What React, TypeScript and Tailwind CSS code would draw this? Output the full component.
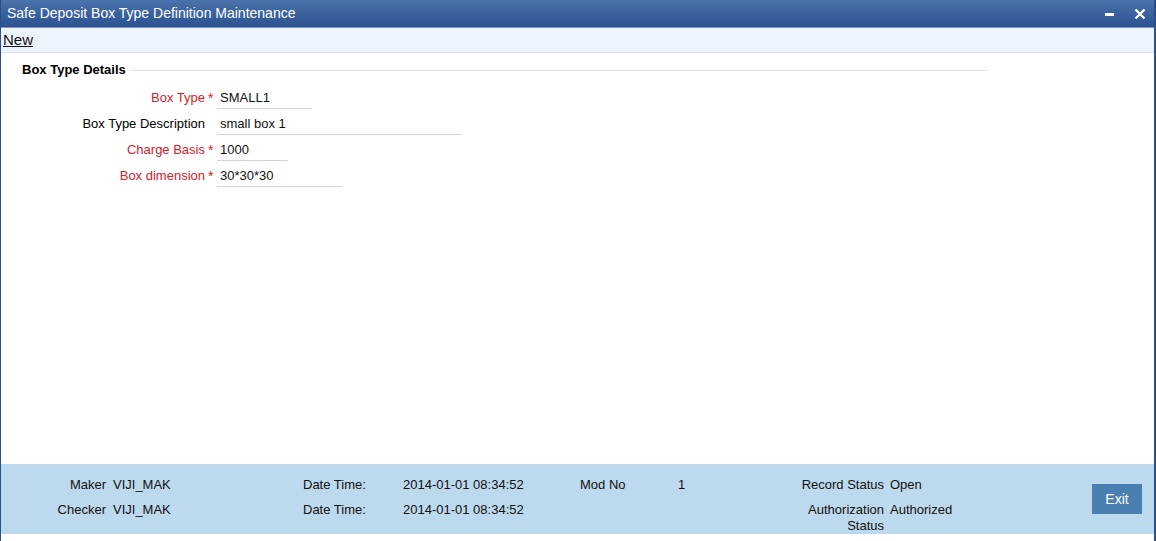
import React from 'react';

const fields = [
  { label: 'Box Type', required: true, value: 'SMALL1', width: 'w-[95px]' },
  { label: 'Box Type Description', required: false, value: 'small box 1', width: 'w-[245px]' },
  { label: 'Charge Basis', required: true, value: '1000', width: 'w-[71px]' },
  { label: 'Box dimension', required: true, value: '30*30*30', width: 'w-[125px]' },
];

const App: React.FC = () => {
  return (
    <div className="w-[1156px] h-[541px] flex flex-col bg-white border-l border-r-2 border-[#2b4f8a] overflow-hidden font-['Liberation_Sans',Arial,sans-serif] text-[13px] text-black">
      {/* title bar */}
      <div className="h-[28px] shrink-0 flex items-center justify-between pl-[6px] pr-[8px] bg-gradient-to-b from-[#4a72ab] to-[#2c5290] border-b border-[#7f97b8]">
        <span className="text-white text-[14px]">Safe Deposit Box Type Definition Maintenance</span>
        <div className="flex items-center gap-[19px]">
          <svg width="11" height="11" viewBox="0 0 11 11">
            <rect x="1" y="5" width="9" height="3" fill="white" />
          </svg>
          <svg width="12" height="12" viewBox="0 0 12 12">
            <path d="M1.5 1.5 L10.5 10.5 M10.5 1.5 L1.5 10.5" stroke="white" strokeWidth="2.4" />
          </svg>
        </div>
      </div>

      {/* toolbar */}
      <div className="h-[25px] shrink-0 flex items-center pl-[2px] bg-[#eef4fd] border-b border-[#dfe4ea]">
        <span className="underline text-[15px] text-[#111]">New</span>
      </div>

      {/* content */}
      <div className="flex-1 pt-[9px]">
        <div className="flex items-center pl-[21px] w-[987px] h-[16px]">
          <span className="font-bold text-[13px] leading-[16px] mr-[4px]">Box Type Details</span>
          <div className="flex-1 h-px bg-[#e3e3e3]" />
        </div>
        <div className="flex flex-col mt-[10px] gap-[5px]">
          {fields.map((f) => (
            <div key={f.label} className="flex items-end h-[21px]">
              <div className="w-[204px] text-right leading-[16px] pb-[3px]">
                <span className={f.required ? 'text-[#d5202a]' : ''}>{f.label}</span>
              </div>
              <div className="w-[12px] text-[#d5202a] text-[14px] leading-[16px] pb-[3px] pl-[3px]">{f.required ? '*' : ''}</div>
              <div className={`${f.width} h-[21px] border-b border-[#d3d3d3] pl-[3px] pt-[2px] leading-[16px] text-[#111]`}>{f.value}</div>
            </div>
          ))}
        </div>
      </div>

      {/* footer */}
      <div className="h-[70px] shrink-0 mb-[7px] bg-[#bdd9ed] flex text-[13px] text-[#111]">
        <div className="flex flex-col pt-[8px]">
          <div className="flex h-[25px] items-center">
            <span className="w-[105px] text-right">Maker</span>
            <span className="w-[197px] pl-[7px]">VIJI_MAK</span>
            <span className="w-[100px]">Date Time:</span>
            <span className="w-[177px]">2014-01-01 08:34:52</span>
            <span className="w-[98px]">Mod No</span>
            <span className="w-[106px]">1</span>
            <span className="w-[100px] text-right">Record Status</span>
            <span className="pl-[6px]">Open</span>
          </div>
          <div className="flex h-[25px] items-start pt-[5px]">
            <span className="w-[105px] text-right leading-[16px]">Checker</span>
            <span className="w-[197px] pl-[7px] leading-[16px]">VIJI_MAK</span>
            <span className="w-[100px] leading-[16px]">Date Time:</span>
            <span className="w-[177px] leading-[16px]">2014-01-01 08:34:52</span>
            <span className="w-[304px] text-right leading-[16px]">Authorization<br />Status</span>
            <span className="pl-[6px] leading-[16px]">Authorized</span>
          </div>
        </div>
        <div className="ml-auto mr-[12px] self-center w-[50px] h-[30px] bg-[#4a80b1] text-white text-[14px] flex items-center justify-center">Exit</div>
      </div>
    </div>
  );
};

export default App;
